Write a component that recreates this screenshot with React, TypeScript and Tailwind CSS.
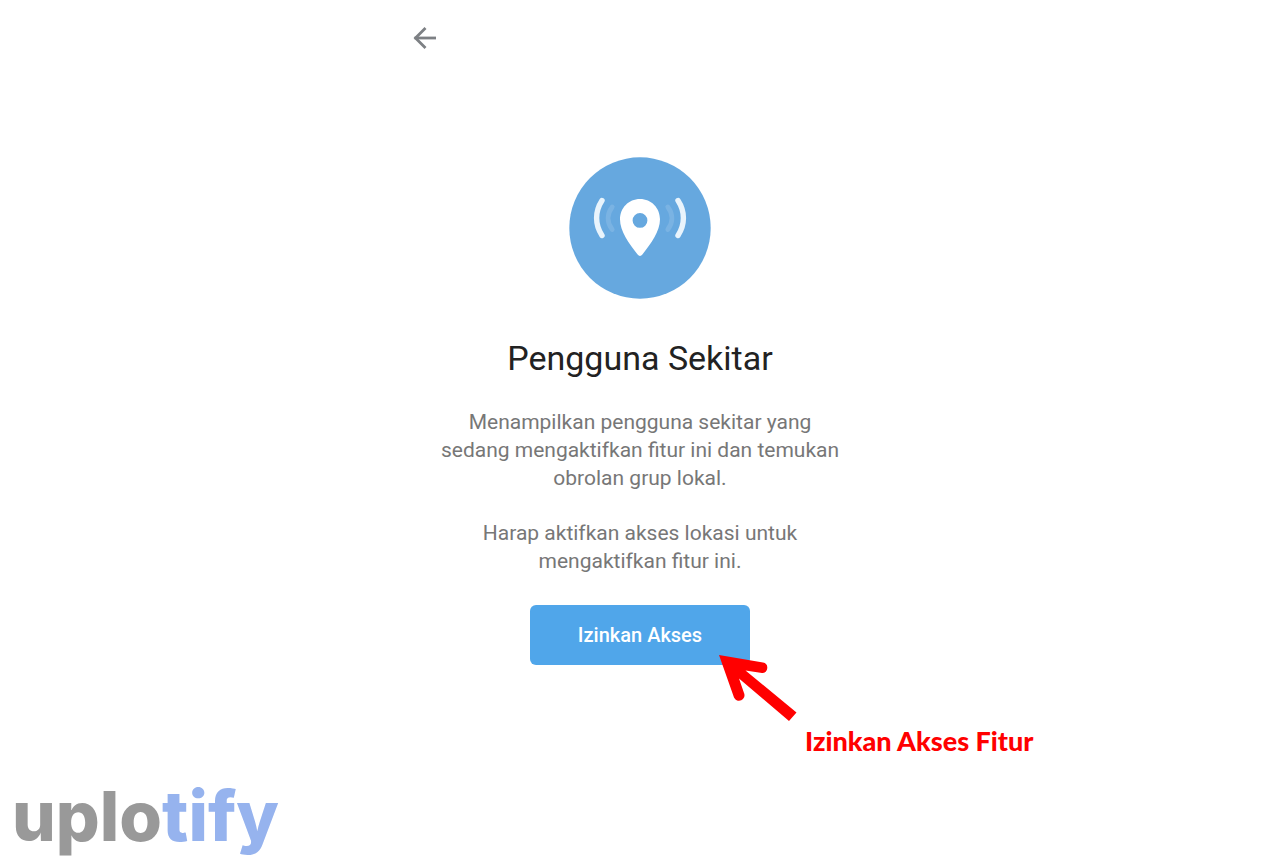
const DESCRIPTION = [
  ['Menampilkan pengguna sekitar yang', 'sedang mengaktifkan fitur ini dan temukan', 'obrolan grup lokal.'],
  ['Harap aktifkan akses lokasi untuk', 'mengaktifkan fitur ini.'],
];

function BackIcon() {
  return (
    <svg viewBox="0 0 24 24" className="h-6 w-6" fill="none" stroke="#7d8084" strokeWidth="2.8" aria-hidden="true">
      <path d="M2.5 12H24.5" />
      <path d="M13.5 2L3.5 12L13.5 22" />
    </svg>
  );
}

function NearbyIcon() {
  return (
    <svg viewBox="0 0 142 142" className="h-[142px] w-[142px]" fill="none" aria-hidden="true">
      <circle cx="71" cy="71" r="70.7" fill="#66a8df" />
      <g stroke="#e9f4fc" strokeWidth="5.4" strokeLinecap="round">
        <path d="M33 43.5C25.8 54.5 25.8 67.5 33 78.5" />
        <path d="M109 43.5C116.2 54.500 116.2 67.5 109 78.5" />
      </g>
      <g stroke="#7ab3e3" strokeWidth="4.8" strokeLinecap="round">
        <path d="M43.2 50C37.8 57 37.8 65.5 43.2 72.5" />
        <path d="M98.8 50C104.2 57 104.2 65.5 98.8 72.5" />
      </g>
      <path
        fill="#fff"
        fillRule="evenodd"
        d="M71 42C59.6 42 51 51 51 62.3C51 74.5 60 86.5 68.6 97.6C70 99.4 72 99.4 73.4 97.6C82 86.5 91 74.5 91 62.3C91 51 82.4 42 71 42ZM71 56A7.4 7.4 0 1 1 71 70.8A7.4 7.4 0 1 1 71 56Z"
      />
    </svg>
  );
}

function PointerArrow() {
  return (
    <svg viewBox="0 0 78 68" className="h-[68px] w-[78px]" fill="#f00" aria-hidden="true">
      <path d="M0 1L44 8.500A5.300 5.300 0 0 1 43 19L26.500 16.500L77.500 58.500L70 67L20 24.500L25 39A5.300 5.300 0 0 1 15 43.500Z" />
    </svg>
  );
}

export default function App() {
  return (
    <div className="flex min-h-screen flex-col bg-white font-['Roboto',sans-serif]">
      <header className="mx-auto w-full max-w-[480px] px-3 pt-[26px]">
        <button type="button" aria-label="Kembali" className="block">
          <BackIcon />
        </button>
      </header>

      <main className="mx-auto flex w-full max-w-[480px] flex-col items-center pt-[107px] text-center">
        <NearbyIcon />
        <h1 className="mt-[39px] text-[34px] leading-10 text-[#222]">Pengguna Sekitar</h1>

        <div className="mt-[30px] flex flex-col gap-[27px] text-[21px] leading-7 text-[#777]">
          {DESCRIPTION.map((lines) => (
            <p key={lines[0]}>
              {lines.map((line) => (
                <span key={line} className="block">{line}</span>
              ))}
            </p>
          ))}
        </div>

        <div className="relative mt-[30px]">
          <button type="button" className="block h-[60px] w-[220px] rounded-md bg-[#50a6ea] text-[20px] font-medium text-white">
            Izinkan Akses
          </button>
          <div className="absolute left-[189px] top-[49px]">
            <PointerArrow />
            <p className="ml-[86px] whitespace-nowrap font-['Lato',sans-serif] text-[27px] font-black leading-[38px] text-[#f00]">
              Izinkan Akses Fitur
            </p>
          </div>
        </div>
      </main>

      <footer className="mt-auto px-3 font-['Inter',sans-serif] text-[69px] font-extrabold leading-[104px] text-[#999]">
        uplo<span className="text-[#96b3ee]">tify</span>
      </footer>
    </div>
  );
}
